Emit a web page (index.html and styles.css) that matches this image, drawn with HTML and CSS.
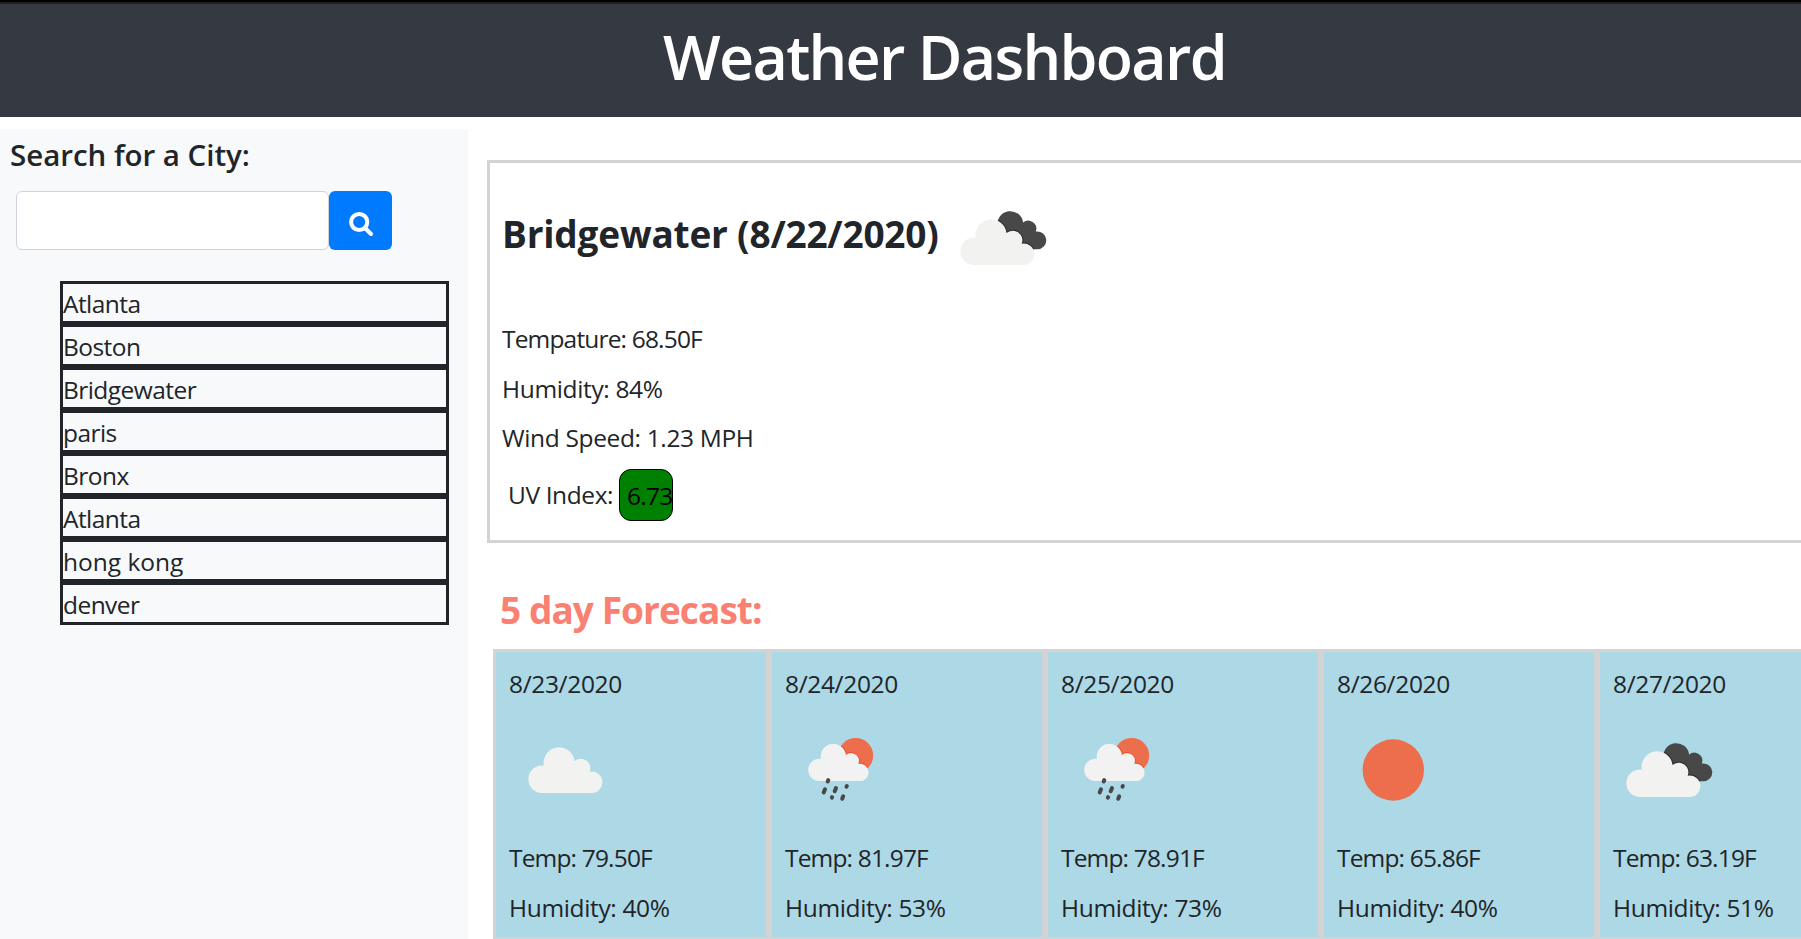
FILE: index.html
```html
<!DOCTYPE html>
<html lang="en">
<head>
<meta charset="utf-8">
<title>Weather Dashboard</title>
<link rel="stylesheet" href="styles.css">
</head>
<body>
<svg class="defs" width="0" height="0" aria-hidden="true">
  <defs>
    <path id="cloud" d="M14 46A13.700 13.700 0 0 1 14 18.600L15.800 18.600A15.530 15.530 0 1 1 46.500 14A9.600 9.600 0 0 1 61.700 24.800A10.700 10.700 0 1 1 63.300 46Z"/>
    <clipPath id="dark-clip"><path transform="translate(24.500 0) scale(.83)" d="M14 46A13.700 13.700 0 0 1 14 18.600L15.800 18.600A15.530 15.530 0 1 1 46.500 14A9.600 9.600 0 0 1 61.700 24.800A10.700 10.700 0 1 1 63.300 46Z"/></clipPath>
    <clipPath id="sun-clip"><circle cx="47.700" cy="17.500" r="17.500"/></clipPath>
    <g id="broken" transform="translate(7 23)">
      <use href="#cloud" class="dark" transform="translate(24.500 0) scale(.83)"/>
      <g clip-path="url(#dark-clip)"><use href="#cloud" class="dark-edge" transform="translate(0 8)"/></g>
      <use href="#cloud" class="pale" transform="translate(0 8)"/>
    </g>
    <g id="rain" transform="translate(17 18)">
      <circle class="sun" cx="47.700" cy="17.500" r="17.500"/>
      <g clip-path="url(#sun-clip)"><use href="#cloud" class="sun-edge" transform="translate(0 5.600) scale(.815)"/></g>
      <use href="#cloud" class="pale-rain" transform="translate(0 5.600) scale(.815)"/>
      <path class="drops" d="M20.300 42.200L19.700 43.500M17 51.300L15.700 54.500M28 50L26.700 53.200M38.800 48.100L38.500 48.700M24.100 59.200L23.900 59.600M35.200 58.300L34.200 60.800"/>
    </g>
  </defs>
</svg>
<header class="header"><h1 class="title">Weather Dashboard</h1></header>
<div class="layout">
  <aside class="sidebar">
    <h2 class="search-title">Search for a City:</h2>
    <form class="search">
      <input class="search-input" type="text" aria-label="City">
      <button class="search-button" type="button" aria-label="Search">
        <svg width="24" height="24" viewBox="0 0 24 24"><circle cx="10.200" cy="10" r="8.100"/><path d="M16 16l6 6"/></svg>
      </button>
    </form>
    <ul class="cities">
      <li class="city">Atlanta</li>
      <li class="city">Boston</li>
      <li class="city">Bridgewater</li>
      <li class="city">paris</li>
      <li class="city">Bronx</li>
      <li class="city">Atlanta</li>
      <li class="city wide">hong kong</li>
      <li class="city">denver</li>
    </ul>
  </aside>
  <main class="main">
    <section class="current">
      <div class="current-head">
        <h2 class="current-title">Bridgewater (8/22/2020)</h2>
        <svg class="current-icon" width="100" height="100"><use href="#broken"/></svg>
      </div>
      <p class="line temp">Tempature: 68.50F</p>
      <p class="line">Humidity: 84%</p>
      <p class="line">Wind Speed: 1.23 MPH</p>
      <div class="uv"><span class="uv-label">UV Index:</span><span class="uv-value">6.73</span></div>
    </section>
    <h2 class="forecast-title">5 day Forecast:</h2>
    <div class="forecast">
      <article class="day">
        <p class="line">8/23/2020</p>
        <div class="icon"><svg width="100" height="100"><use href="#cloud" class="pale" x="13" y="27"/></svg></div>
        <p class="line temp">Temp: 79.50F</p>
        <p class="line">Humidity: 40%</p>
      </article>
      <article class="day">
        <p class="line">8/24/2020</p>
        <div class="icon"><svg width="100" height="100"><use href="#rain"/></svg></div>
        <p class="line temp">Temp: 81.97F</p>
        <p class="line">Humidity: 53%</p>
      </article>
      <article class="day">
        <p class="line">8/25/2020</p>
        <div class="icon"><svg width="100" height="100"><use href="#rain"/></svg></div>
        <p class="line temp">Temp: 78.91F</p>
        <p class="line">Humidity: 73%</p>
      </article>
      <article class="day">
        <p class="line">8/26/2020</p>
        <div class="icon"><svg width="100" height="100"><circle class="sun" cx="50.300" cy="50" r="30.700"/></svg></div>
        <p class="line temp">Temp: 65.86F</p>
        <p class="line">Humidity: 40%</p>
      </article>
      <article class="day">
        <p class="line">8/27/2020</p>
        <div class="icon"><svg width="100" height="100"><use href="#broken"/></svg></div>
        <p class="line temp">Temp: 63.19F</p>
        <p class="line">Humidity: 51%</p>
      </article>
    </div>
  </main>
</div>
</body>
</html>
```
FILE: styles.css
```css
* { box-sizing: border-box; }
body { margin: 0; height: 939px; overflow: hidden; background: #fff; color: #212529; font: 24.500px/37px "Open Sans", "Noto Sans", sans-serif; }
h1, h2, p, ul { margin: 0; padding: 0; }
svg { display: block; flex: none; }
.defs { height: 0; }

.header { height: 117px; border-top: 2px solid #000; box-shadow: inset 0 2px #1f201f; background: #353941; padding: 17px 0 0 88px; text-align: center; }
.title { color: #fff; font-size: 61px; line-height: 76px; font-weight: 600; letter-spacing: -1.700px; }

.layout { display: flex; padding-top: 12px; }
.sidebar { width: 468px; height: 810px; flex: none; background: #f8f9fb; padding-top: 8px; }
.search-title { padding-left: 10px; font-size: 29.500px; line-height: 36px; font-weight: 600; letter-spacing: -0.030px; }
.search { display: flex; padding: 18px 0 0 16px; }
.search-input { width: 313px; height: 59px; border: 1px solid #ced4da; border-radius: 6px; background: #fff; }
.search-button { width: 63px; height: 59px; border: 0; border-radius: 6px; background: #007bff; padding: 6px 0 0 20px; }
.search-button svg { overflow: visible; fill: none; stroke: #fff; stroke-width: 4; stroke-linecap: round; }
.cities { list-style: none; margin: 31px 0 0 60px; width: 389px; }
.city { height: 43px; border: 3px solid #212529; line-height: 39px; letter-spacing: -0.550px; }
.wide { letter-spacing: 0; }

.main { flex: none; width: 1400px; padding: 31px 0 0 19px; }
.current { height: 383px; border: 3px solid #d3d3d3; padding-left: 12px; }
.current-head { height: 157px; display: flex; }
.current-title { padding-top: 48px; font-size: 37px; line-height: 46px; font-weight: 700; letter-spacing: -0.200px; width: 451px; white-space: nowrap; }
.current-icon { margin-top: 25px; }
.line { height: 49.500px; line-height: 37px; letter-spacing: -0.350px; white-space: nowrap; }
.temp { letter-spacing: -0.830px; }
.uv { display: flex; padding-left: 6px; }
.uv-label { width: 111px; padding-top: 7px; letter-spacing: -0.400px; }
.uv-value { width: 54px; height: 52px; background: #008000; border: 1px solid #000; border-radius: 12px; padding: 7px; color: #000; letter-spacing: -0.700px; }

.forecast-title { padding: 42px 0 0 13px; height: 106px; font-size: 37px; line-height: 50px; font-weight: 700; letter-spacing: -0.920px; color: #fa8072; }
.forecast { display: flex; padding-left: 6px; }
.day { width: 276px; height: 291px; flex: none; border: 3px solid #d3d3d3; background: #add8e6; padding: 13px 0 0 13px; }
.icon { height: 124.500px; padding: 5.500px 0 0 6px; }

.pale { fill: #f2f2f0; }
.pale-rain { fill: #f2f2f2; }
.dark { fill: #484849; }
.dark-edge { fill: none; stroke: #2a2a2c; stroke-width: 2; }
.sun { fill: #ec6e4c; }
.sun-edge { fill: none; stroke: #ee4f2c; stroke-width: 2; }
.drops { fill: none; stroke: #484849; stroke-width: 4; stroke-linecap: round; }
```
